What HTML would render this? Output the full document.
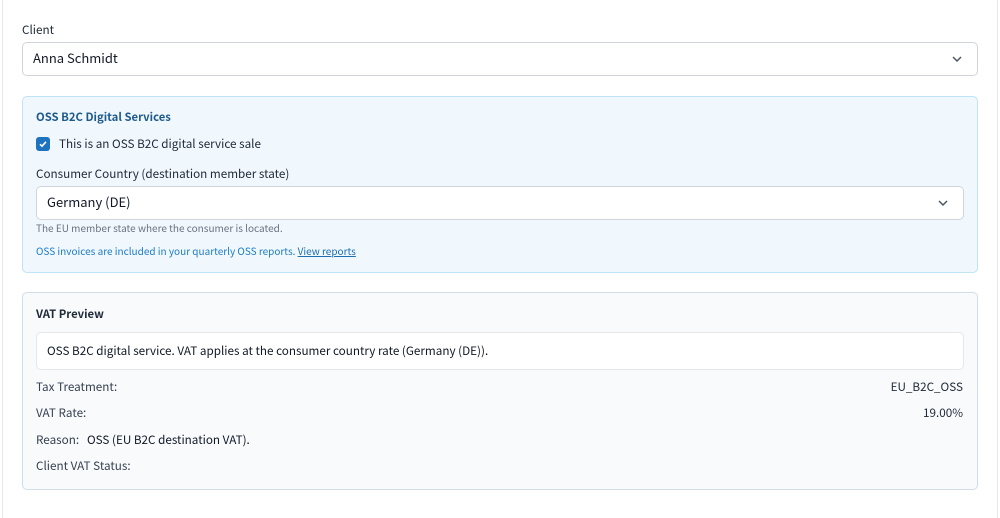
<!DOCTYPE html>
<html><head><meta charset="utf-8"><style>
*{box-sizing:border-box;margin:0;padding:0}
body{width:1000px;height:506px;background:#fff;font-family:"Noto Sans CJK SC","Liberation Sans",sans-serif;color:#1f2937;position:relative;overflow:hidden}
.frame{position:absolute;left:2px;top:-2px;width:996px;height:520px;border-left:1px solid #e5e7eb;border-right:1px solid #e5e7eb}
.abs{position:absolute;line-height:1.2}
.lbl{font-size:11.7px;color:#1f2937}
.sel{position:absolute;background:#fff;border:1px solid #d1d5db;border-radius:5px;font-size:13px;padding-left:10px;padding-bottom:3px;display:flex;align-items:center;color:#111827}
.sel svg{position:absolute;right:14px;top:50%;margin-top:-4px}
</style></head><body>
<div class="frame"></div>
<div class="abs lbl" style="left:22px;top:23px">Client</div>
<div class="sel" style="left:22px;top:42px;width:956px;height:34px">Anna Schmidt<svg width="12" height="8" viewBox="0 0 12 8"><path d="M2 2l4 4 4-4" fill="none" stroke="#4b5563" stroke-width="1.5"/></svg></div>

<div class="abs" style="left:22px;top:96px;width:956px;height:177px;background:#f0f7fd;border:1px solid #bfe3f7;border-radius:5px"></div>
<div class="abs" style="left:36px;top:111px;font-size:11.3px;font-weight:bold;color:#1e5b8c">OSS B2C Digital Services</div>
<div class="abs" style="left:36px;top:137px;width:14px;height:14px;background:#1d73bd;border-radius:3px"><svg width="14" height="14" viewBox="0 0 14 14" style="display:block"><path d="M4 7.2l2 2 4-4.4" fill="none" stroke="#fff" stroke-width="1.6"/></svg></div>
<div class="abs lbl" style="left:59px;top:137px">This is an OSS B2C digital service sale</div>
<div class="abs lbl" style="left:36px;top:167px">Consumer Country (destination member state)</div>
<div class="sel" style="left:36px;top:186px;width:928px;height:34px">Germany (DE)<svg width="12" height="8" viewBox="0 0 12 8"><path d="M2 2l4 4 4-4" fill="none" stroke="#4b5563" stroke-width="1.5"/></svg></div>
<div class="abs" style="left:36px;top:222px;font-size:10px;color:#6b7280">The EU member state where the consumer is located.</div>
<div class="abs" style="left:36px;top:245px;font-size:10px;color:#1d7cc4">OSS invoices are included in your quarterly OSS reports. <span style="text-decoration:underline;color:#1d6fb0">View reports</span></div>

<div class="abs" style="left:22px;top:292px;width:956px;height:198px;background:#f8fafc;border:1px solid #d3dde8;border-radius:5px"></div>
<div class="abs" style="left:36px;top:308px;font-size:11.3px;font-weight:bold;color:#1f2937">VAT Preview</div>
<div class="abs" style="left:36px;top:332px;width:928px;height:38px;background:#fff;border:1px solid #e5e7eb;border-radius:5px;font-size:11.7px;padding:11px 0 0 10px;color:#111827">OSS B2C digital service. VAT applies at the consumer country rate (Germany (DE)).</div>
<div class="abs lbl" style="left:36px;top:380px;color:#374151">Tax Treatment:</div>
<div class="abs lbl" style="right:37px;top:380px">EU_B2C_OSS</div>
<div class="abs lbl" style="left:36px;top:406px;color:#374151">VAT Rate:</div>
<div class="abs lbl" style="right:37px;top:406px">19.00%</div>
<div class="abs lbl" style="left:36px;top:433px;color:#374151">Reason:&nbsp;&nbsp; <span style="color:#111827">OSS (EU B2C destination VAT).</span></div>
<div class="abs lbl" style="left:36px;top:459px;color:#374151">Client VAT Status:</div>
</body></html>
